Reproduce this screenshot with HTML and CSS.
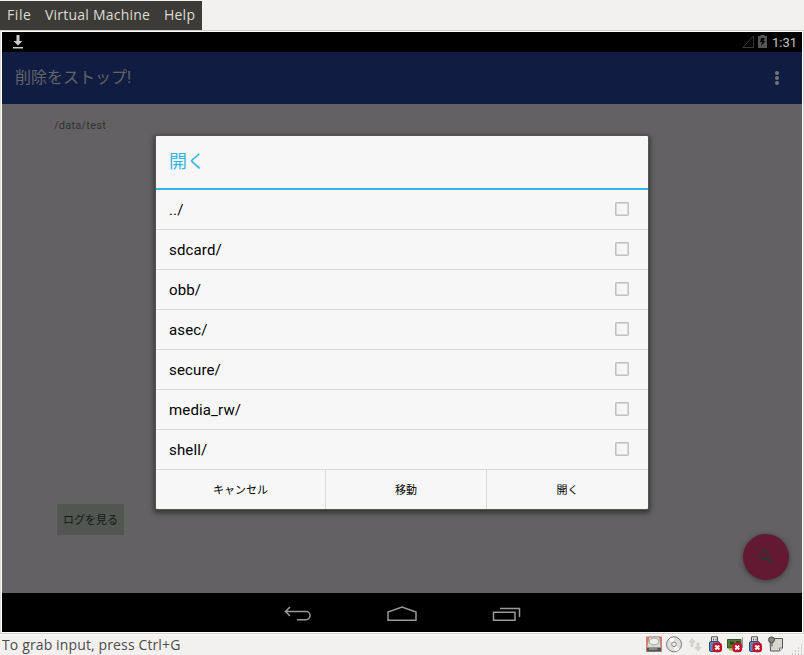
FILE: index.html
```html
<!DOCTYPE html>
<html lang="ja">
<head>
<meta charset="utf-8">
<title>Virtual Machine</title>
<link rel="stylesheet" href="styles.css">
</head>
<body>
<nav class="menubar"><span class="m-file">File</span><span class="m-vm">Virtual Machine</span><span class="m-help">Help</span></nav>
<main class="screen">
  <header class="status">
    <svg class="download" width="12" height="14" viewBox="0 0 12 14"><path d="M4.500 0h3v6H10.500L6 10.500 1.500 6h3zM1 12h10v1.500H1z" fill="#ccc"/></svg>
    <div class="status-right">
      <svg width="12" height="14" viewBox="0 0 12 14"><path d="M.8 12.500H11.500V1z" fill="none" stroke="#383838"/></svg>
      <svg class="battery" width="9" height="13" viewBox="0 0 9 13"><path d="M0 1h2.500V0h4v1H9v12H0z" fill="#555"/><path d="M3 3h4L5.500 6H7.500L3 11l1-4H2z" fill="#080808"/></svg>
      <span class="clock">1:31</span>
    </div>
  </header>
  <div class="appbar"><h1>削除をストップ!</h1><svg width="4" height="14" viewBox="0 0 4 14" fill="#747477"><circle cx="2" cy="2" r="2"/><circle cx="2" cy="7" r="2"/><circle cx="2" cy="12" r="2"/></svg></div>
  <section class="content">
    <p class="path">/data/test</p>
    <button class="log">ログを見る</button>
    <div class="fab"><svg width="16" height="16" viewBox="0 0 16 16" fill="none" stroke="#30332f"><circle cx="6" cy="6" r="4.200" stroke-width="2"/><path d="M9 9l4.700 4.200" stroke-width="2.800"/></svg></div>
  </section>
  <footer class="navbar">
    <svg width="28" height="16" viewBox="0 0 28 16"><path d="M6 1L1.500 5.500 6 10M1.500 5.500H22a4 4 0 0 1 0 8.200H13" fill="none" stroke="#999" stroke-width="1.500"/></svg>
    <svg width="30" height="16" viewBox="0 0 30 16"><path d="M1 14.200V6L15 1l14 5v8.200z" fill="none" stroke="#999" stroke-width="1.500"/></svg>
    <svg width="29" height="16" viewBox="0 0 29 16"><path d="M1.500 6.300H23v7.900H1.500zM8 2.500h19.500V11" fill="none" stroke="#999" stroke-width="1.500"/></svg>
  </footer>
  <div class="dialog">
    <h2>開く</h2>
    <ul>
      <li><span>../</span><i></i></li>
      <li><span>sdcard/</span><i></i></li>
      <li><span>obb/</span><i></i></li>
      <li><span>asec/</span><i></i></li>
      <li><span>secure/</span><i></i></li>
      <li><span>media_rw/</span><i></i></li>
      <li><span>shell/</span><i></i></li>
    </ul>
    <div class="actions"><span>キャンセル</span><span>移動</span><span>開く</span></div>
  </div>
</main>
<footer class="hostbar">
  <span class="hint">To grab input, press Ctrl+G</span>
  <div class="devices">
    <svg width="17" height="17" viewBox="0 0 17 17"><path d="M0 .500h16v15.500H0z" fill="#e47b5c"/><path d="M3 1h10.500l1.500 10v4.500H1V11z" fill="#d8d8d5" stroke="#888" stroke-width=".6"/><ellipse cx="8" cy="5.500" rx="4.600" ry="3.300" fill="#eee" stroke="#aaa"/><path d="M1 11.500h14v4H1z" fill="#555"/><path d="M3 13h8" stroke="#bbb"/></svg>
    <svg width="17" height="17" viewBox="0 0 17 17"><circle cx="8" cy="8.300" r="7.500" fill="#dfdfdd" stroke="#777"/><path d="M8 8.300L3 3.500A7 7 0 0 1 8 1.500zM8 8.300l5.500 5a7 7 0 0 1-5 1.900z" fill="#fff"/><circle cx="8" cy="8.300" r="2.300" fill="#eee" stroke="#888"/></svg>
    <svg width="17" height="17" viewBox="0 0 17 17" fill="#d3d2cc"><path d="M5 2l4 4.500H6.500V11h-3V6.500H1zM11 15.500L7 11h2.500V6.500h3V11H15z"/></svg>
    <svg width="17" height="17" viewBox="0 0 17 17"><path d="M4.500.8h6V6h-6z" fill="#eee" stroke="#555"/><path d="M6 2.500h1v2H6zM8.500 2.500h1v2h-1z" fill="#555"/><rect x="2.500" y="5.500" width="10" height="10" rx="1.500" fill="#6483b2" stroke="#2d4875"/><rect x="5.500" y="6.800" width="9.500" height="9.500" rx="3" fill="#c5102a"/><path d="M8.300 9.500l4 4m0-4l-4 4" stroke="#fff" stroke-width="1.800"/></svg>
    <svg width="17" height="17" viewBox="0 0 17 17"><path d="M.5 3.500H14V12H.5z" fill="#517d39" stroke="#315a24"/><path d="M3 5.500h4v3H3zM9 5h4v2H9z" fill="#294b24"/><path d="M2 12.500h5v2H2z" fill="#c5ab49"/><path d="M15.500 1v11" stroke="#999"/><rect x="5.500" y="6.800" width="9.500" height="9.500" rx="3" fill="#c5102a"/><path d="M8.300 9.500l4 4m0-4l-4 4" stroke="#fff" stroke-width="1.800"/></svg>
    <svg width="17" height="17" viewBox="0 0 17 17"><path d="M4.500.8h6V6h-6z" fill="#eee" stroke="#555"/><path d="M6 2.500h1v2H6zM8.500 2.500h1v2h-1z" fill="#555"/><rect x="2.500" y="5.500" width="10" height="10" rx="1.500" fill="#6483b2" stroke="#2d4875"/><rect x="5.500" y="6.800" width="9.500" height="9.500" rx="3" fill="#c5102a"/><path d="M8.300 9.500l4 4m0-4l-4 4" stroke="#fff" stroke-width="1.800"/></svg>
    <svg width="17" height="17" viewBox="0 0 17 17"><path d="M2 2.500h12.500v9.500l-3 3H2.500z" fill="#d8d7cf" stroke="#55564f"/><path d="M14.500 12h-3v3" fill="#f5f5ef" stroke="#777"/><path d="M4 6.500v4" stroke="#444"/><circle cx="3.500" cy="3.800" r="2.900" fill="#888a85" stroke="#444"/></svg>
    <svg class="grip" width="11" height="11" viewBox="0 0 11 11"><path d="M9 1h1M6 4h1M9 4h1M3 7h1M6 7h1M9 7h1M0 10h1M3 10h1M6 10h1M9 10h1" stroke="#aaa"/></svg>
  </div>
</footer>
</body>
</html>
```

FILE: styles.css
```css
* { box-sizing: border-box; }
body { margin: 0; width: 804px; height: 655px; overflow: hidden; background: #f2f1ef; font-family: Roboto, "Noto Sans CJK JP", sans-serif; }
h1, h2, p, ul { margin: 0; padding: 0; font-weight: 400; }
svg { display: block; flex: none; }
.menubar { width: 202px; height: 29px; margin-top: 1px; padding: 0 0 2px 7px; display: flex; align-items: center; background: #3c3b37; color: #dfdbd2; font: 14px/27px "Open Sans", sans-serif; letter-spacing: .22px; white-space: nowrap; }
.m-file { width: 38px; letter-spacing: .6px; }
.m-vm { width: 119px; }
.screen { position: relative; width: 804px; height: 604px; border: 1px solid #d2d0cb; border-left-color: #dedcd7; box-shadow: inset 0 0 0 1px #fff; padding: 1px; }
.status { height: 20px; background: #000; display: flex; justify-content: space-between; padding: 3px 7px 0 10px; }
.status-right { display: flex; }
.battery { margin-left: 4px; }
.clock { width: 23px; margin-left: 5px; color: #c4c4c4; font-size: 13px; line-height: 15px; white-space: nowrap; }
.appbar { height: 52px; background: #111c42; display: flex; align-items: center; justify-content: space-between; padding: 0 23px 0 13px; }
.appbar h1 { color: #626467; font-size: 16px; line-height: 24px; }
.content { height: 489px; background: #646164; display: grid; grid-template-rows: 400px 1fr; grid-template-columns: 1fr auto; padding-left: 52px; padding-right: 13px; }
.path { color: #303531; font-size: 11px; line-height: 14px; margin-top: 15px; letter-spacing: .25px; grid-column: 1 / 3; }
.log { width: 67px; height: 31px; margin-left: 3px; padding: 2px 0 0; border: 0; border-radius: 1px; background: #515650; color: #171918; font: 11px/30px Roboto, "Noto Sans CJK JP", sans-serif; white-space: nowrap; }
.fab { width: 46px; height: 46px; margin-top: 30px; border-radius: 50%; background: #641932; display: grid; place-items: center; box-shadow: 0 1px 4px 1px #414741; }
.navbar { height: 39px; background: #000; display: flex; padding: 13px 0 0 282px; }
.navbar svg:nth-child(2) { margin-left: 75px; }
.navbar svg:nth-child(3) { margin-left: 75px; }
.dialog { position: absolute; left: 155px; top: 105px; width: 492px; height: 373px; border-radius: 1px; background: #f7f7f7; color: #000; box-shadow: 0 0 1px 1px #555853, 0 2px 5px 2px #303530; }
.dialog h2 { height: 54px; border-bottom: 2px solid #33b5e5; padding: 1px 13px 0; color: #33b5e5; font-size: 18px; line-height: 50px; }
.dialog ul { list-style: none; }
.dialog li { height: 40px; border-bottom: 1px solid #d9d9d9; display: flex; align-items: center; justify-content: space-between; padding: 1px 19px 0 13px; font-size: 15px; letter-spacing: .15px; }
.dialog i { width: 14px; height: 14px; margin-top: -3px; border: 1.500px solid #c2c0c2; border-radius: 1px; box-shadow: inset 0 0 0 1px #d8d7d8; }
.actions { height: 39px; display: grid; grid-template-columns: 169px 161px 162px; text-align: center; font-size: 11px; line-height: 41px; overflow: hidden; }
.actions span + span { border-left: 1px solid #d9d9d9; }
.hostbar { height: 21px; display: flex; justify-content: space-between; padding-left: 2px; border-top: 1px solid #fafaf9; }
.hint { color: #4c4c4c; font: 14px/19px "Open Sans", sans-serif; letter-spacing: .13px; white-space: nowrap; }
.devices { display: flex; gap: 3.300px; padding: 1px 1px 0 0; }
.grip { margin: 8px 0 0 4px; }
```
